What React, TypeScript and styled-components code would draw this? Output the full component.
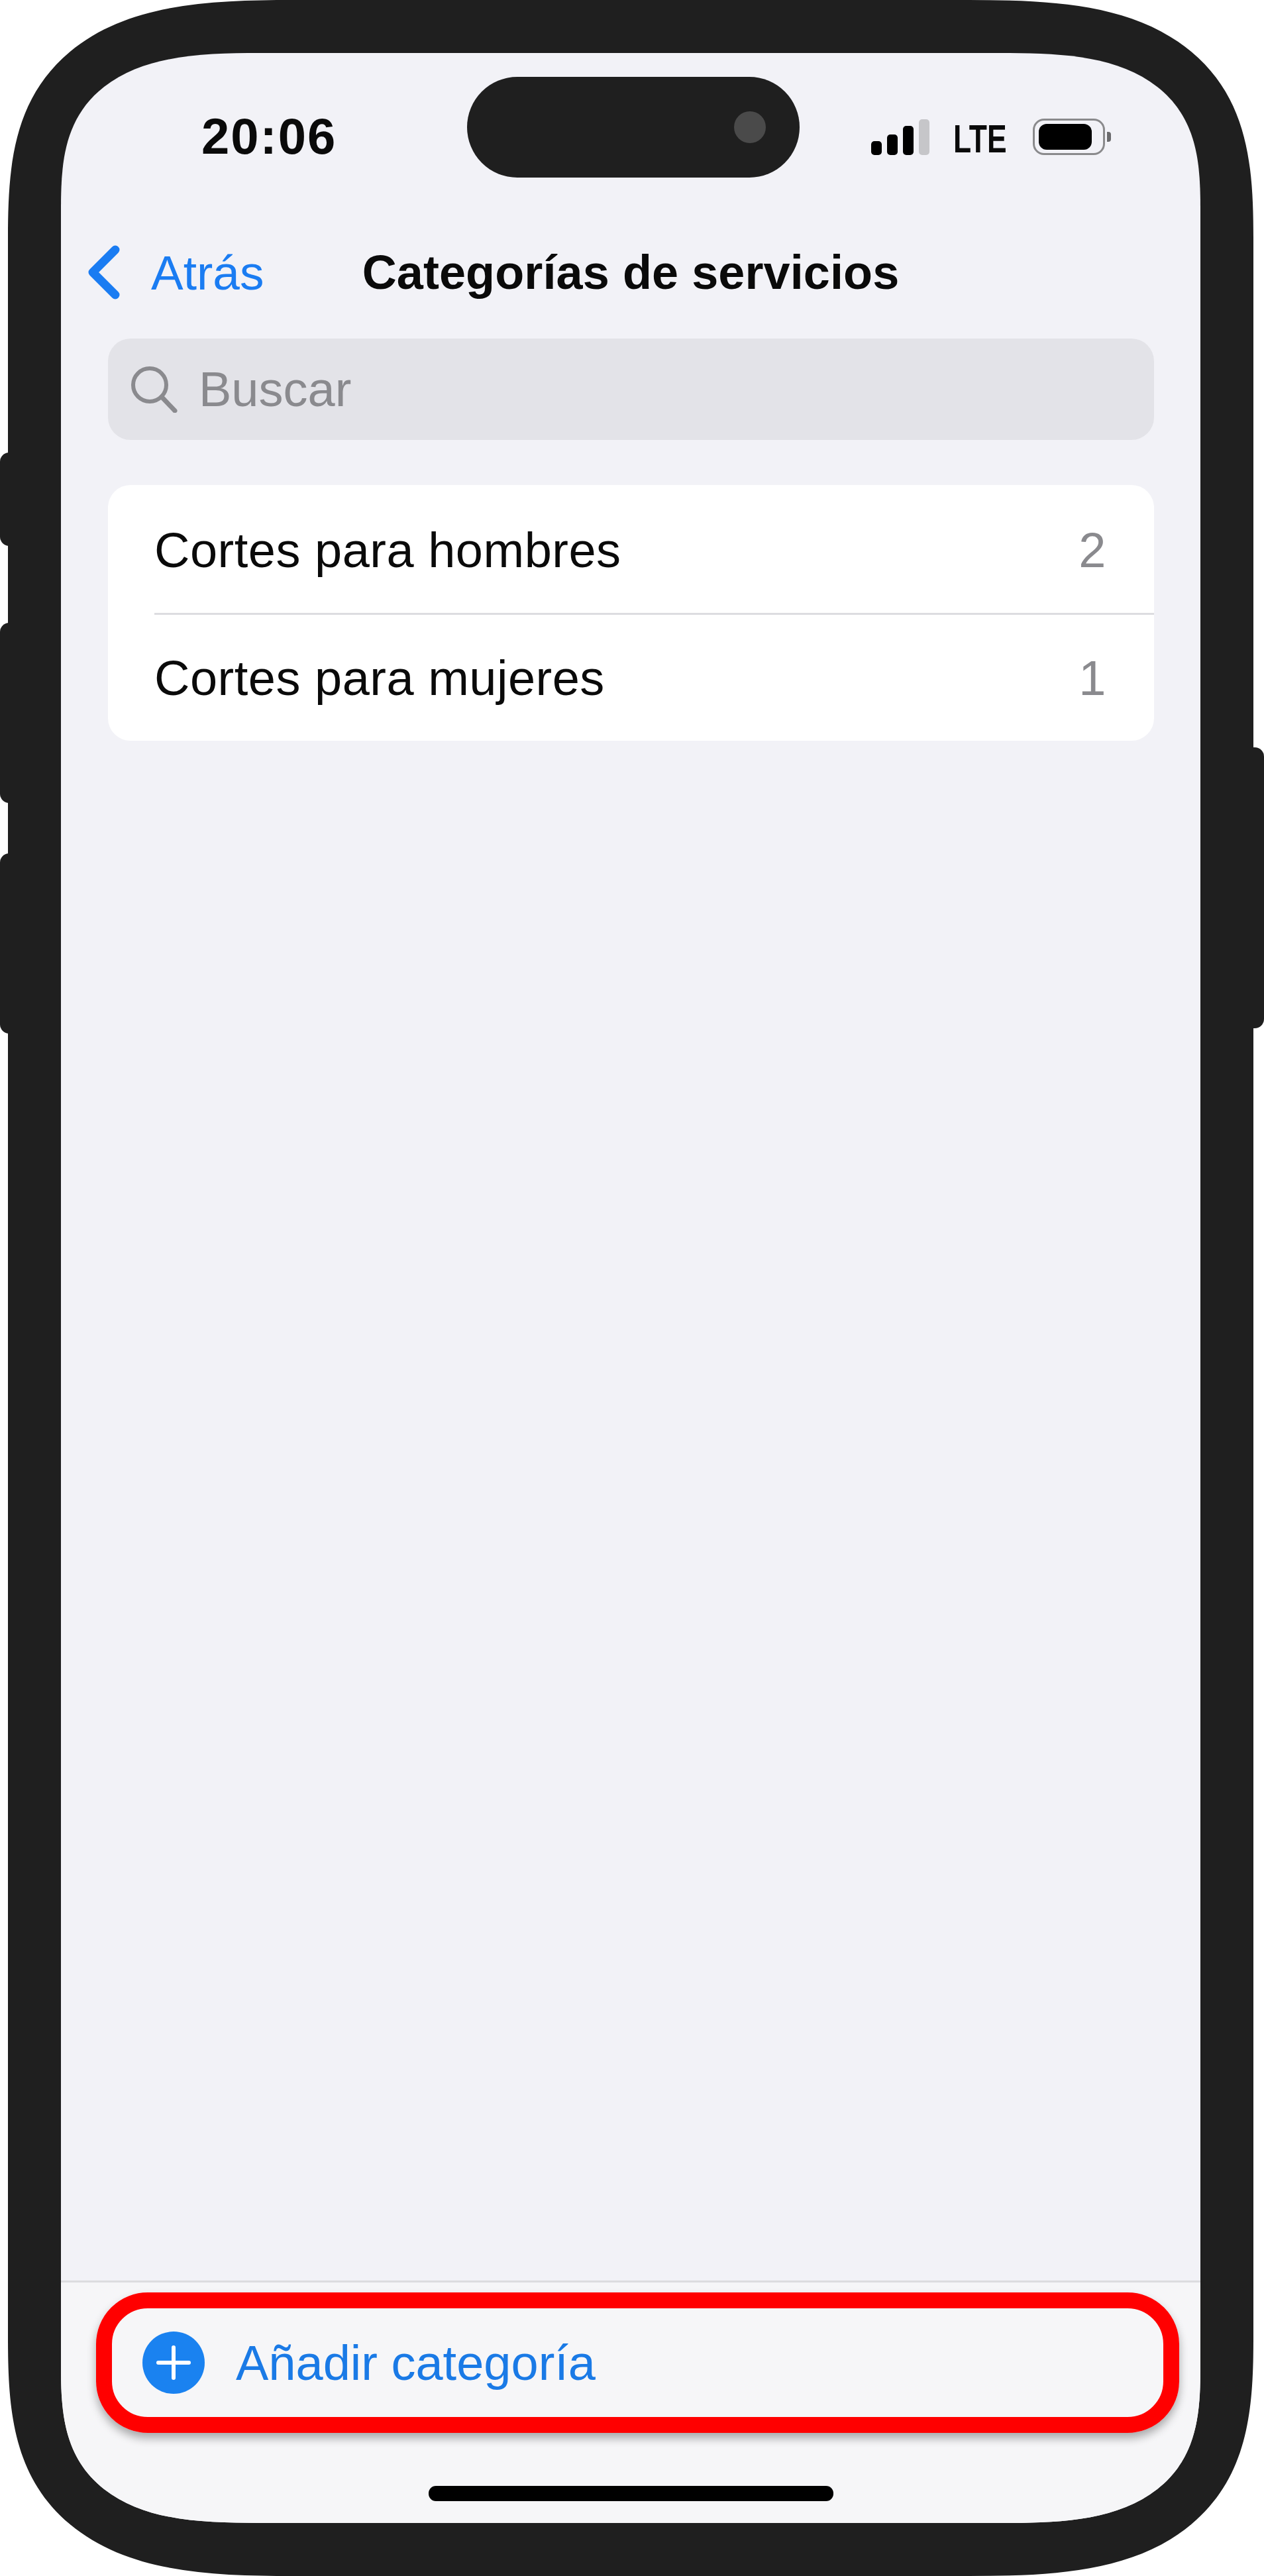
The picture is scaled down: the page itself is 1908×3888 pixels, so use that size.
import React from "react";
import styled, { createGlobalStyle } from "styled-components";

const Global = createGlobalStyle`
  html, body { margin: 0; padding: 0; background: #fff; }
  body { font-family: "Liberation Sans", Arial, sans-serif; }
`;

const Page = styled.div`
  position: relative;
  width: 1908px;
  height: 3888px;
  padding: 0 16px 0 12px;
  box-sizing: border-box;
  background: #fff;
  overflow: hidden;
`;

const SideButton = styled.div<{ $side: "left" | "right"; $top: number; $height: number }>`
  position: absolute;
  ${(p) => (p.$side === "left" ? "left: 0; border-radius: 14px 0 0 14px;" : "right: 0; border-radius: 0 14px 14px 0;")}
  top: ${(p) => p.$top}px;
  width: 40px;
  height: ${(p) => p.$height}px;
  background: #1f1f1f;
`;

const Phone = styled.div`
  position: relative;
  height: 100%;
  box-sizing: border-box;
  padding: 80px 80px;
  background: #1f1f1f;
  border-radius: 300px / 290px;
  @supports (corner-shape: superellipse(1.5)) {
    border-radius: 430px / 360px;
    corner-shape: superellipse(1.5);
  }
`;

const Screen = styled.div`
  display: flex;
  flex-direction: column;
  height: 100%;
  background: #f2f2f7;
  border-radius: 215px / 200px;
  overflow: hidden;
  @supports (corner-shape: superellipse(1.5)) {
    border-radius: 300px / 235px;
    corner-shape: superellipse(1.5);
  }
`;

const Island = styled.div`
  position: absolute;
  left: 693px;
  top: 116px;
  width: 502px;
  height: 152px;
  border-radius: 76px;
  background: #1f1f1f;
`;

const Camera = styled.div`
  position: absolute;
  right: 51px;
  top: 52px;
  width: 48px;
  height: 48px;
  border-radius: 50%;
  background: #4a4a4a;
`;

const StatusBar = styled.div`
  display: flex;
  align-items: center;
  justify-content: space-between;
  height: 100px;
  margin-top: 76px;
  padding: 0 135px 0 212px;
`;

const Time = styled.div`
  font-size: 76px;
  font-weight: 700;
  line-height: 100px;
  letter-spacing: 2px;
  color: #0a0a0a;
`;

const StatusIcons = styled.div`
  display: flex;
  align-items: flex-end;
  height: 56px;
`;

const Signal = styled.div`
  display: flex;
  align-items: flex-end;
  gap: 8px;
  margin-right: 36px;
`;

const SignalBar = styled.div<{ $h: number; $off?: boolean }>`
  width: 16px;
  height: ${(p) => p.$h}px;
  border-radius: 5px;
  background: ${(p) => (p.$off ? "#c6c6c9" : "#000")};
`;

const Lte = styled.div`
  width: 84px;
  height: 44px;
  margin-right: 36px;
  margin-bottom: 2px;
  font-size: 60px;
  font-weight: 700;
  line-height: 44px;
  color: #0a0a0a;
  transform: scaleX(0.74);
  transform-origin: left center;
`;

const Battery = styled.div`
  display: flex;
  align-items: center;
  gap: 3px;
`;

const BatteryBody = styled.div`
  box-sizing: border-box;
  width: 109px;
  height: 55px;
  padding: 5px 17px 5px 6px;
  border: 3px solid #8a8a8c;
  border-radius: 17px;
`;

const BatteryFill = styled.div`
  width: 100%;
  height: 100%;
  border-radius: 12px;
  background: #000;
`;

const BatteryNub = styled.div`
  width: 6px;
  height: 15px;
  border-radius: 0 4px 4px 0;
  background: #6a6a6c;
`;

const NavBar = styled.div`
  position: relative;
  display: flex;
  align-items: center;
  justify-content: center;
  height: 130px;
  margin-top: 90px;
`;

const Back = styled.div`
  position: absolute;
  left: 41px;
  top: 0;
  height: 100%;
  display: flex;
  align-items: center;
  gap: 47px;
  font-size: 73px;
  color: #1a7cf2;
`;

const Title = styled.div`
  font-size: 72px;
  font-weight: 700;
  letter-spacing: 0.1px;
  color: #0a0a0a;
`;

const Content = styled.div`
  flex: 1;
  display: flex;
  flex-direction: column;
  padding: 0 70px 0 71px;
`;

const Search = styled.div`
  display: flex;
  align-items: center;
  gap: 32px;
  height: 153px;
  margin-top: 35px;
  padding-left: 35px;
  border-radius: 34px;
  background: #e3e3e8;
  font-size: 74px;
  color: #8a8a8e;
`;

const List = styled.div`
  margin-top: 68px;
  padding-left: 70px;
  border-radius: 34px;
  background: #fff;
`;

const Row = styled.div<{ $divider?: boolean }>`
  display: flex;
  align-items: center;
  justify-content: space-between;
  box-sizing: border-box;
  height: 193px;
  padding: 4px 72px 0 0;
  font-size: 74px;
  letter-spacing: 0.5px;
  color: #0a0a0a;
  ${(p) => p.$divider && "box-shadow: 0 3px 0 #dcdce0;"}
`;

const Count = styled.span`
  color: #8a8a8e;
`;

const Footer = styled.div`
  display: flex;
  flex-direction: column;
  align-items: center;
  height: 366px;
  border-top: 3px solid #dcdcdf;
  box-sizing: border-box;
  background: #f6f6f8;
`;

const Highlight = styled.div`
  display: flex;
  align-items: center;
  align-self: flex-start;
  gap: 47px;
  box-sizing: border-box;
  width: 1635px;
  height: 212px;
  margin: 15px 0 0 53px;
  padding: 0 0 0 46px;
  border: 24px solid #ff0000;
  border-radius: 78px;
  box-shadow: 0 8px 14px rgba(0, 0, 0, 0.32);
  font-size: 74px;
  color: #1a7ae6;
`;

const HomeBar = styled.div`
  width: 611px;
  height: 23px;
  margin-top: 80px;
  border-radius: 11px;
  background: #000;
`;

export default function App() {
  return (
    <Page>
      <Global />
      <SideButton $side="left" $top={683} $height={141} />
      <SideButton $side="left" $top={940} $height={272} />
      <SideButton $side="left" $top={1288} $height={272} />
      <SideButton $side="right" $top={1128} $height={424} />
      <Phone>
        <Island>
          <Camera />
        </Island>
        <Screen>
          <StatusBar>
            <Time>20:06</Time>
            <StatusIcons>
              <Signal>
                <SignalBar $h={21} />
                <SignalBar $h={31} />
                <SignalBar $h={44} />
                <SignalBar $h={54} $off />
              </Signal>
              <Lte>LTE</Lte>
              <Battery>
                <BatteryBody>
                  <BatteryFill />
                </BatteryBody>
                <BatteryNub />
              </Battery>
            </StatusIcons>
          </StatusBar>
          <NavBar>
            <Back>
              <svg width="48" height="82" viewBox="0 0 48 82" fill="none">
                <path d="M41 7 L7 41 L41 75" stroke="#1a7cf2" strokeWidth="13" strokeLinecap="round" strokeLinejoin="round" />
              </svg>
              <span>Atrás</span>
            </Back>
            <Title>Categorías de servicios</Title>
          </NavBar>
          <Content>
            <Search>
              <svg width="70" height="70" viewBox="0 0 70 70" fill="none">
                <circle cx="28" cy="28" r="25" stroke="#8a8a8e" strokeWidth="6" />
                <path d="M46 46 L66 67" stroke="#8a8a8e" strokeWidth="7" strokeLinecap="round" />
              </svg>
              <span>Buscar</span>
            </Search>
            <List>
              <Row $divider>
                <span>Cortes para hombres</span>
                <Count>2</Count>
              </Row>
              <Row>
                <span>Cortes para mujeres</span>
                <Count>1</Count>
              </Row>
            </List>
          </Content>
          <Footer>
            <Highlight>
              <svg width="94" height="94" viewBox="0 0 94 94">
                <circle cx="47" cy="47" r="47" fill="#1a82f0" />
                <path d="M47 24 V70 M24 47 H70" stroke="#fff" strokeWidth="6" strokeLinecap="round" />
              </svg>
              <span>Añadir categoría</span>
            </Highlight>
            <HomeBar />
          </Footer>
        </Screen>
      </Phone>
    </Page>
  );
}
